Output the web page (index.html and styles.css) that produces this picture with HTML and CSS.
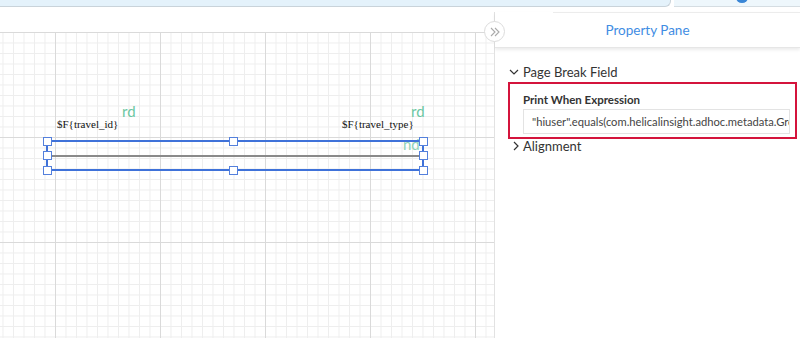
FILE: index.html
```html
<!DOCTYPE html>
<html>
<head>
<meta charset="utf-8">
<link rel="stylesheet" href="styles.css">
</head>
<body>
<div class="app">
  <div class="topstrip">
    <div class="tab"></div>
    <div class="tab-right"><span class="dot"></span></div>
  </div>
  <div class="main">
    <div class="canvas-area">
      <div class="spacer"></div>
      <div class="grid">
        <span class="lbl-green g1">rd</span>
        <span class="lbl-green g2">rd</span>
        <span class="lbl-green g3">nd</span>
        <span class="field f1">$F{travel_id}</span>
        <span class="field f2">$F{travel_type}</span>
        <div class="selection">
          <div class="midline"></div>
        </div>
        <span class="handle" style="left:43px;top:105px"></span>
        <span class="handle" style="left:229px;top:105px"></span>
        <span class="handle" style="left:419px;top:105px"></span>
        <span class="handle" style="left:43px;top:119px"></span>
        <span class="handle" style="left:419px;top:119px"></span>
        <span class="handle" style="left:43px;top:134px"></span>
        <span class="handle" style="left:229px;top:134px"></span>
        <span class="handle" style="left:419px;top:134px"></span>
      </div>
    </div>
    <div class="pane">
      <div class="pane-header">Property Pane</div>
      <div class="pane-body">
        <div class="section-title">
          <svg class="chev" width="10" height="10" viewBox="0 0 10 10"><path d="M1 3 L5 7 L9 3" fill="none" stroke="#333" stroke-width="1.2"/></svg>
          <span>Page Break Field</span>
        </div>
        <div class="highlight">
          <div class="prop-label">Print When Expression</div>
          <div class="prop-input">"hiuser".equals(com.helicalinsight.adhoc.metadata.GroupService.getCurrentUser())</div>
        </div>
        <div class="section-title collapsed">
          <svg class="chev" width="10" height="10" viewBox="0 0 10 10"><path d="M3 1 L7 5 L3 9" fill="none" stroke="#333" stroke-width="1.2"/></svg>
          <span>Alignment</span>
        </div>
      </div>
    </div>
  </div>
  <div class="toggle">
    <svg width="12" height="12" viewBox="0 0 12 12"><path d="M2 2 L6 6 L2 10 M6 2 L10 6 L6 10" fill="none" stroke="#aaa" stroke-width="1.1"/></svg>
  </div>
</div>
</body>
</html>
```
FILE: styles.css
```css
html, body {
  margin: 0;
  padding: 0;
  background: #fff;
}
.app {
  position: relative;
  width: 800px;
  height: 338px;
  overflow: hidden;
  font-family: "Lato", "Noto Sans", sans-serif;
  color: #333;
}
.topstrip {
  height: 8px;
  display: flex;
}
.tab {
  width: 670px;
  height: 6px;
  background: #e4f2fb;
  border-bottom: 1px solid #c9d3da;
  border-right: 1px solid #c9d3da;
  border-bottom-right-radius: 6px;
}
.tab-right {
  flex: 1;
  height: 6px;
  background: #eef7fc;
  border-bottom: 1px solid #d5dde2;
  margin-left: 3px;
  position: relative;
}
.dot {
  position: absolute;
  left: 62px;
  top: -8px;
  width: 12px;
  height: 11px;
  border-radius: 50%;
  background: #3a86d6;
}
.main {
  display: flex;
  height: 330px;
}
.canvas-area {
  width: 495px;
  display: flex;
  flex-direction: column;
}
.spacer {
  height: 24px;
}
.grid {
  position: relative;
  flex: 1;
  background-color: #fff;
  background-image:
    linear-gradient(to right, #dadada 1px, transparent 1px),
    linear-gradient(to bottom, #dadada 1px, transparent 1px),
    linear-gradient(to right, #eeeeee 1px, transparent 1px),
    linear-gradient(to bottom, #eeeeee 1px, transparent 1px);
  background-size: 105px 105px, 105px 105px, 10.5px 10.5px, 10.5px 10.5px;
  background-position: 55px 0, 0 0, 55px 0, 0 0;
}
.lbl-green {
  position: absolute;
  font-family: "Lato", sans-serif;
  font-size: 15px;
  color: #6cc7a3;
  line-height: 1;
}
.g1 { left: 122px; top: 72px; }
.g2 { left: 411px; top: 72px; }
.g3 { left: 403px; top: 105px; color: #8fd3b8; }
.field {
  position: absolute;
  font-family: "Liberation Serif", serif;
  font-size: 11px;
  color: #111;
  line-height: 1;
}
.f1 { left: 57px; top: 87px; }
.f2 { left: 342px; top: 87px; }
.selection {
  position: absolute;
  left: 46px;
  top: 108px;
  width: 374px;
  height: 27px;
  border: 2px solid #3f72d9;
}
.midline {
  position: absolute;
  left: 0;
  right: 0;
  top: 13px;
  height: 2px;
  background: #8a8a8a;
}
.handle {
  position: absolute;
  width: 7px;
  height: 7px;
  background: #fff;
  border: 1px solid #5480dc;
}
.pane {
  width: 305px;
  margin-top: 4px;
  border-left: 1px solid #e2e2e2;
  background: #fff;
}
.pane-header {
  height: 34px;
  line-height: 34px;
  text-align: center;
  color: #3f8de3;
  font-size: 13.5px;
  background: linear-gradient(#ececec, #ececec) 58px 0 / 100% 1px no-repeat;
  box-shadow: 0 2px 3px rgba(0,0,0,0.08);
  border-bottom: 1px solid #e6e6e6;
  padding-top: 1px;
}
.pane-body {
  padding: 14px 3px 0 13px;
}
.section-title {
  display: flex;
  align-items: center;
  gap: 4px;
  font-size: 13px;
  color: #333;
  height: 20px;
  padding-left: 1px;
}
.section-title.collapsed {
  padding-left: 3px;
  gap: 2px;
  margin-top: 0;
  height: 13px;
}
.highlight {
  margin-top: 0;
  border: 2px solid #d4143c;
  padding: 9px 5px 3px 13px;
  height: 41px;
}
.prop-label {
  font-size: 11.5px;
  font-weight: 700;
  color: #333;
  margin-bottom: 2px;
  height: 14px;
  line-height: 14px;
}
.prop-input {
  height: 23px;
  line-height: 23px;
  border: 1px solid #e3e3e3;
  padding-left: 8px;
  font-size: 11.2px;
  color: #444;
  white-space: nowrap;
  overflow: hidden;
}
.toggle {
  position: absolute;
  left: 484px;
  top: 21px;
  width: 19px;
  height: 19px;
  border-radius: 50%;
  border: 1px solid #dcdcdc;
  background: #fff;
  display: flex;
  align-items: center;
  justify-content: center;
}
```
